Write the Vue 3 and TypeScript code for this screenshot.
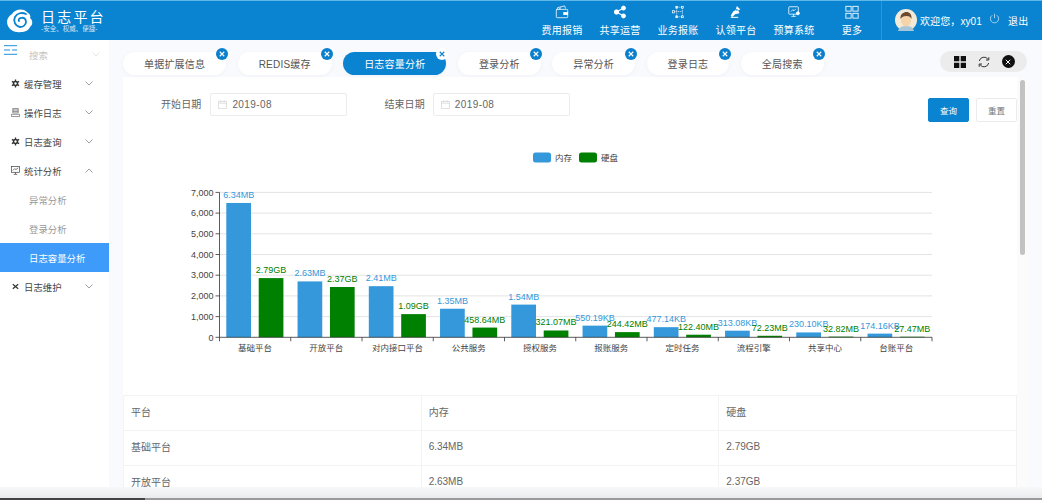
<script setup lang="ts">
const navItems = ["费用报销", "共享运营", "业务报账", "认领平台", "预算系统", "更多"];
const tabs = ["单据扩展信息", "REDIS缓存", "日志容量分析", "登录分析", "异常分析", "登录日志", "全局搜索"];
const activeTab = 2;

const chart = [
  { name: "基础平台", mem: 6490, memLabel: "6.34MB", disk: 2860, diskLabel: "2.79GB" },
  { name: "开放平台", mem: 2700, memLabel: "2.63MB", disk: 2430, diskLabel: "2.37GB" },
  { name: "对内接口平台", mem: 2470, memLabel: "2.41MB", disk: 1120, diskLabel: "1.09GB" },
  { name: "公共服务", mem: 1380, memLabel: "1.35MB", disk: 470, diskLabel: "458.64MB" },
  { name: "授权服务", mem: 1580, memLabel: "1.54MB", disk: 329, diskLabel: "321.07MB" },
  { name: "报账服务", mem: 563, memLabel: "550.19KB", disk: 250, diskLabel: "244.42MB" },
  { name: "定时任务", mem: 489, memLabel: "477.14KB", disk: 125, diskLabel: "122.40MB" },
  { name: "流程引擎", mem: 320, memLabel: "313.08KB", disk: 74, diskLabel: "72.23MB" },
  { name: "共享中心", mem: 235, memLabel: "230.10KB", disk: 34, diskLabel: "32.82MB" },
  { name: "台账平台", mem: 178, memLabel: "174.16KB", disk: 28, diskLabel: "27.47MB" },
];

const x0 = 219.5;
const xEnd = 932;
const y0 = 337.3;
const catW = (xEnd - x0) / 10;
const barW = 24.7;
const yOf = (v: number) => y0 - (v / 1000) * 20.7;
const ticks = [0, 1000, 2000, 3000, 4000, 5000, 6000, 7000];
const catX = (i: number) => x0 + i * catW;

const rows = [
  ["基础平台", "6.34MB", "2.79GB"],
  ["开放平台", "2.63MB", "2.37GB"],
];
</script>

<template>
  <div class="page">
    <header class="topbar">
      <div class="brand">
        <svg class="logo" viewBox="0 0 26 24" width="26" height="24">
          <path d="M5 5C8 0 16-1 20 3c3 2 4 4 3 6 3 2 3 7 0 9-1 3-5 5-9 5-6 1-11-2-13-6-2-4-1-9 4-12z" fill="#fff" />
          <path d="M19 5c-4-2-9-1-11 3-2 4 0 9 5 10 3 0 6-2 6-5s-2-5-5-4c-2 0-3 2-2 3" fill="none" stroke="#0a84d0" stroke-width="1.8" stroke-linecap="round" />
        </svg>
        <div class="brand-text">
          <div class="brand-title">日志平台</div>
          <div class="brand-sub">-安全、权威、便捷-</div>
        </div>
      </div>
      <nav class="nav">
        <div v-for="(item, i) in navItems" :key="item" class="nav-item">
          <svg width="14" height="14" viewBox="0 0 16 16" class="nav-icon">
            <g v-if="i === 0" fill="none" stroke="#fff" stroke-width=".9">
              <path d="M2 6l1-3 8-2 1 3" />
              <rect x="1.5" y="5" width="13" height="9.5" rx="1" />
              <rect x="10" y="8.5" width="4.5" height="2.5" fill="#fff" />
              <path d="M4 5l3-2" />
            </g>
            <g v-else-if="i === 1" fill="#fff" stroke="#fff">
              <path d="M12 3.5L4 8l8 4.500" fill="none" stroke-width="1.200" />
              <circle cx="12" cy="3.500" r="2.300" />
              <circle cx="4" cy="8" r="2.500" />
              <circle cx="12" cy="12.500" r="2.300" />
            </g>
            <g v-else-if="i === 2" fill="none" stroke="#fff" stroke-width=".8">
              <rect x="1.500" y="6.500" width="2.500" height="2.500" />
              <rect x="5.500" y="1.500" width="2" height="2" />
              <rect x="12" y="1.500" width="2" height="2" />
              <rect x="5.500" y="12.500" width="2" height="2" />
              <rect x="12" y="12.500" width="2" height="2" />
              <path d="M6.500 3.500v9M13 3.500v9M7.500 2.500H12M7.500 13.500H12M4 7.500h9" stroke-dasharray="1.200 .8" />
            </g>
            <g v-else-if="i === 3" fill="#fff">
              <path d="M9 1l4 4-2.500 1 1.500 3.500-5 1L3.500 14 2 12l3-5 2.500-1z" />
              <path d="M2 13.500h8.500v1.200H2z" />
              <circle cx="9" cy="5.500" r="1" fill="#0a84d0" />
            </g>
            <g v-else-if="i === 4" fill="none" stroke="#fff" stroke-width=".9">
              <rect x="2" y="2" width="11" height="8.500" rx=".8" />
              <path d="M5 13h5M7.500 10.500V13M4.500 7.500l2-2 1.500 1 2-2" />
              <circle cx="12.500" cy="9.500" r="1.700" fill="#fff" />
            </g>
            <g v-else fill="none" stroke="#fff" stroke-width="1">
              <rect x="1" y="1.500" width="6" height="5.500" />
              <rect x="9" y="1.500" width="6" height="5.500" />
              <rect x="1" y="9.500" width="6" height="5.500" />
              <rect x="9" y="9.500" width="6" height="5.500" />
            </g>
          </svg>
          <span>{{ item }}</span>
        </div>
      </nav>
      <div class="user">
        <svg class="avatar" viewBox="0 0 22 22" width="22" height="22">
          <circle cx="11" cy="11" r="11" fill="#f3ead8" />
          <path d="M3 22c1-4 4-5 8-5s7 1 8 5z" fill="#a9c6d8" />
          <ellipse cx="11" cy="11.500" rx="5" ry="6" fill="#f4d4a8" />
          <path d="M5.500 10c-.5-5 3-7 6-7s5.500 2.500 5 7c-1-2-2-3-5-3s-5 1-6 3z" fill="#6b4a32" />
        </svg>
        <span class="welcome">欢迎您，xy01</span>
        <svg class="power" viewBox="0 0 12 12" width="11" height="11">
          <path d="M3.500 2.500a4.500 4.500 0 1 0 5 0M6 .8v4.700" fill="none" stroke="#d6ecf9" stroke-width=".8" />
        </svg>
        <span class="logout">退出</span>
      </div>
    </header>

    <div class="body">
      <aside class="sidebar">
        <svg class="toggle" viewBox="0 0 14 10" width="14" height="10">
          <path d="M0 .7h13M0 5h6M8 5h5M0 9.300h13" stroke="#1f8fdc" stroke-width="1" />
        </svg>
        <div class="search">
          <span>搜索</span>
          <svg class="chev" viewBox="0 0 8 5" width="8" height="5"><path d="M.5.500L4 4 7.500.500" fill="none" stroke="#ddd" stroke-width=".8" /></svg>
        </div>
        <div class="menu-item">
          <svg viewBox="0 0 10 10" width="9" height="9"><path d="M5 .5v9M1 2.700l8 4.600M9 2.700L1 7.300" stroke="#333" stroke-width="1.500" /><circle cx="5" cy="5" r="3" fill="#333" /><circle cx="5" cy="5" r="1.300" fill="#fff" /></svg>
          <span>缓存管理</span>
          <svg class="chev" viewBox="0 0 8 5" width="8" height="5"><path d="M.5.500L4 4 7.500.500" fill="none" stroke="#888" stroke-width=".8" /></svg>
        </div>
        <div class="menu-item">
          <svg viewBox="0 0 10 10" width="9" height="9"><path d="M2 .5h6v5H2zM2 2.200h6M2 3.800h6M.5 7h9v2.500h-9z" fill="none" stroke="#555" stroke-width=".7" /></svg>
          <span>操作日志</span>
          <svg class="chev" viewBox="0 0 8 5" width="8" height="5"><path d="M.5.500L4 4 7.500.500" fill="none" stroke="#888" stroke-width=".8" /></svg>
        </div>
        <div class="menu-item">
          <svg viewBox="0 0 10 10" width="9" height="9"><path d="M5 .5v9M1 2.700l8 4.600M9 2.700L1 7.300" stroke="#333" stroke-width="1.500" /><circle cx="5" cy="5" r="3" fill="#333" /><circle cx="5" cy="5" r="1.300" fill="#fff" /></svg>
          <span>日志查询</span>
          <svg class="chev" viewBox="0 0 8 5" width="8" height="5"><path d="M.5.500L4 4 7.500.500" fill="none" stroke="#888" stroke-width=".8" /></svg>
        </div>
        <div class="menu-item">
          <svg viewBox="0 0 10 10" width="9" height="9"><rect x=".5" y=".5" width="9" height="6.500" fill="none" stroke="#444" stroke-width=".8" /><path d="M2 5l2-2 1.500 1L8 2M3 9.300h4M5 7v2" fill="none" stroke="#444" stroke-width=".8" /></svg>
          <span>统计分析</span>
          <svg class="chev" viewBox="0 0 8 5" width="8" height="5"><path d="M.5 4.500L4 1l3.500 3.500" fill="none" stroke="#888" stroke-width=".8" /></svg>
        </div>
        <div class="sub-item">异常分析</div>
        <div class="sub-item">登录分析</div>
        <div class="sub-item active">日志容量分析</div>
        <div class="menu-item">
          <svg viewBox="0 0 10 10" width="9" height="9"><path d="M2 2.500l6 5M8 2.500L2 7.500" stroke="#333" stroke-width="1.300" /></svg>
          <span>日志维护</span>
          <svg class="chev" viewBox="0 0 8 5" width="8" height="5"><path d="M.5.500L4 4 7.500.500" fill="none" stroke="#888" stroke-width=".8" /></svg>
        </div>
      </aside>

      <main class="main">
        <div class="tabbar">
          <div class="tabs">
            <div v-for="(tab, i) in tabs" :key="tab" class="tab" :class="{ 'tab-active': i === activeTab }">
              {{ tab }}
              <span class="tab-close">
                <svg viewBox="0 0 8 8" width="6" height="6"><path d="M1 1l6 6M7 1L1 7" stroke="currentColor" stroke-width="1.500" /></svg>
              </span>
            </div>
          </div>
          <div class="tools">
            <svg viewBox="0 0 12 12" width="12" height="12"><path d="M0 0h5.300v5.300H0zM6.700 0H12v5.300H6.700zM0 6.700h5.300V12H0zM6.700 6.700H12V12H6.700z" fill="#111" /></svg>
            <svg viewBox="0 0 12 12" width="12" height="12"><path d="M1.300 5A4.800 4.800 0 0 1 10 3.300M10.700 7A4.800 4.800 0 0 1 2 8.700" fill="none" stroke="#222" stroke-width=".9" /><path d="M10.800 1.200v2.800H8M1.200 10.800V8H4" fill="none" stroke="#222" stroke-width=".9" /></svg>
            <span class="tool-close"><svg viewBox="0 0 8 8" width="6" height="6"><path d="M1 1l6 6M7 1L1 7" stroke="#fff" stroke-width="1.300" /></svg></span>
          </div>
        </div>

        <div class="content">
          <section class="panel">
            <div class="filters">
              <label class="filter-label first">开始日期</label>
              <div class="date-input">
                <svg viewBox="0 0 10 10" width="9" height="9"><path d="M.5 1.500h9v8h-9zM.5 3.500h9M3 .5v2M7 .5v2" fill="none" stroke="#ccc" stroke-width=".7" /></svg>
                <span>2019-08</span>
              </div>
              <label class="filter-label second">结束日期</label>
              <div class="date-input">
                <svg viewBox="0 0 10 10" width="9" height="9"><path d="M.5 1.500h9v8h-9zM.5 3.500h9M3 .5v2M7 .5v2" fill="none" stroke="#ccc" stroke-width=".7" /></svg>
                <span>2019-08</span>
              </div>
              <div class="actions">
                <button class="btn btn-primary">查询</button>
                <button class="btn">重置</button>
              </div>
            </div>

            <svg class="chart" viewBox="123 145 894 250" width="894" height="250">
              <rect x="533" y="152.500" width="18" height="10" rx="2.500" fill="#3498db" />
              <text x="555" y="161" class="legend">内存</text>
              <rect x="579" y="152.500" width="18" height="10" rx="2.500" fill="#008000" />
              <text x="601" y="161" class="legend">硬盘</text>

              <g v-for="t in ticks" :key="t">
                <line v-if="t > 0" :x1="x0" :x2="xEnd" :y1="yOf(t)" :y2="yOf(t)" stroke="#e4e4e4" />
                <line :x1="x0 - 4" :x2="x0" :y1="yOf(t)" :y2="yOf(t)" stroke="#333" stroke-width=".8" />
                <text :x="x0 - 6" :y="yOf(t) + 3.200" text-anchor="end" class="axis">{{ t.toLocaleString("en-US") }}</text>
              </g>

              <g v-for="(c, i) in chart" :key="c.name">
                <rect :x="catX(i) + 6.800" :y="yOf(c.mem)" :width="barW" :height="y0 - yOf(c.mem)" fill="#3498db" />
                <rect :x="catX(i) + 39.200" :y="yOf(c.disk)" :width="barW" :height="y0 - yOf(c.disk)" fill="#008000" />
                <text :x="catX(i) + 6.800 + barW / 2" :y="yOf(c.mem) - 5" text-anchor="middle" class="val" fill="#3498db">{{ c.memLabel }}</text>
                <text :x="catX(i) + 39.200 + barW / 2" :y="yOf(c.disk) - 5" text-anchor="middle" class="val" fill="#008000">{{ c.diskLabel }}</text>
                <text :x="catX(i) + catW / 2" y="350.500" text-anchor="middle" class="axis cat">{{ c.name }}</text>
                <line :x1="catX(i)" :x2="catX(i)" :y1="y0" :y2="y0 + 4" stroke="#333" stroke-width=".8" />
              </g>
              <line :x1="xEnd" :x2="xEnd" :y1="y0" :y2="y0 + 4" stroke="#333" stroke-width=".8" />
              <line :x1="x0" :x2="x0" :y1="yOf(7000)" :y2="y0" stroke="#333" stroke-width=".8" />
              <line :x1="x0" :x2="xEnd" :y1="y0" :y2="y0" stroke="#333" stroke-width=".8" />
            </svg>

            <table class="data-table">
              <thead>
                <tr><th>平台</th><th>内存</th><th>硬盘</th></tr>
              </thead>
              <tbody>
                <tr v-for="row in rows" :key="row[0]">
                  <td v-for="cell in row" :key="cell">{{ cell }}</td>
                </tr>
              </tbody>
            </table>
          </section>
          <div class="scroll-track"><div class="scroll-thumb"></div></div>
        </div>
      </main>
    </div>

    <footer class="bottom-fade"><div class="bottom-dark"></div></footer>
  </div>
</template>

<style>
html,
body {
  margin: 0;
  background: #f8fafd;
}
</style>

<style scoped>
.page {
  width: 1042px;
  height: 500px;
  overflow: hidden;
  display: flex;
  flex-direction: column;
  background: #f8fafd;
  font-family: "Liberation Sans", "Noto Sans CJK SC", sans-serif;
  font-size: 10px;
  color: #666;
}

.topbar {
  flex: 0 0 40px;
  box-sizing: border-box;
  display: flex;
  align-items: center;
  background: #0a84d0;
  border-top: 1px solid #5fb8ea;
  color: #fff;
}

.brand {
  display: flex;
  align-items: center;
  gap: 8px;
  padding-left: 7px;
}

.brand-title {
  font-size: 14px;
  line-height: 16px;
  letter-spacing: 2.2px;
  font-family: "Noto Sans CJK SC", sans-serif;
}

.brand-sub {
  font-size: 6.500px;
  line-height: 10px;
  opacity: 0.8;
  white-space: nowrap;
}

.nav {
  margin-left: auto;
  display: flex;
  height: 100%;
}

.nav-item {
  width: 58px;
  display: flex;
  flex-direction: column;
  align-items: center;
  justify-content: flex-start;
  padding-top: 4px;
  box-sizing: border-box;
  letter-spacing: 0.2px;
  line-height: 14px;
}

.nav-icon {
  margin-bottom: 5px;
}

.user {
  width: 161px;
  height: 100%;
  box-sizing: border-box;
  border-left: 1px solid #2f97d8;
  padding-left: 13px;
  display: flex;
  align-items: center;
  padding-bottom: 1px;
}

.avatar {
  margin-right: 3px;
}

.welcome {
  white-space: nowrap;
  letter-spacing: 0.1px;
}

.power {
  margin-left: 7px;
  margin-bottom: 4px;
}

.logout {
  margin-left: 8px;
  letter-spacing: 0.2px;
}

.body {
  flex: 1;
  display: flex;
  min-height: 0;
}

.sidebar {
  flex: 0 0 109px;
  position: relative;
  background: #fff;
  color: #444;
  font-size: 9.400px;
}

.toggle {
  position: absolute;
  left: 4px;
  top: 5px;
}

.search {
  height: 29px;
  display: flex;
  align-items: center;
  padding-left: 29px;
  padding-right: 9px;
  color: #c4c4c4;
}

.search .chev,
.menu-item .chev {
  margin-left: auto;
}

.menu-item {
  height: 29px;
  display: flex;
  align-items: center;
  gap: 4px;
  padding-left: 11px;
  padding-right: 16px;
}

.sub-item {
  height: 29px;
  display: flex;
  align-items: center;
  padding-left: 29px;
  color: #999;
}

.sub-item.active {
  background: #3f9bfa;
  color: #fff;
}

.main {
  flex: 1;
  display: flex;
  flex-direction: column;
  padding-left: 14px;
  min-width: 0;
}

.tabbar {
  flex: 0 0 37px;
  display: flex;
  align-items: flex-start;
  padding-top: 12px;
  box-sizing: border-box;
}

.tabs {
  display: flex;
  gap: 11.500px;
}

.tab {
  position: relative;
  height: 23px;
  box-sizing: border-box;
  padding: 0 21px 1px;
  display: flex;
  align-items: center;
  border-radius: 12px;
  background: #fff;
  box-shadow: 0 1px 4px rgba(0, 0, 0, 0.04);
  color: #555;
  letter-spacing: 0.2px;
  white-space: nowrap;
}

.tab-active {
  background: #0a84d0;
  color: #fff;
}

.tab-close {
  position: absolute;
  top: -4px;
  right: -1.500px;
  width: 12px;
  height: 12px;
  border-radius: 50%;
  background: #0a7fcb;
  color: #fff;
  display: flex;
  align-items: center;
  justify-content: center;
}

.tab-active .tab-close {
  background: #fff;
  color: #0a84d0;
}

.tools {
  margin-left: auto;
  margin-right: 15px;
  margin-top: -1px;
  width: 87px;
  height: 21px;
  box-sizing: border-box;
  padding-left: 1.500px;
  border-radius: 11px;
  background: #ececec;
  display: flex;
  align-items: center;
  justify-content: center;
  gap: 12px;
}

.tool-close {
  width: 13px;
  height: 13px;
  border-radius: 50%;
  background: #111;
  display: flex;
  align-items: center;
  justify-content: center;
}

.content {
  flex: 1;
  display: flex;
  min-height: 0;
}

.panel {
  width: 894px;
  background: #fff;
  overflow: hidden;
}

.filters {
  height: 68px;
  box-sizing: border-box;
  padding-top: 16px;
  display: flex;
  align-items: flex-start;
}

.filter-label {
  line-height: 23px;
  font-size: 10px;
  letter-spacing: 0.1px;
  color: #666;
}

.filter-label.first {
  margin-left: 38px;
  margin-right: 9px;
}

.filter-label.second {
  margin-left: 37px;
  margin-right: 8px;
}

.date-input {
  width: 137px;
  height: 23px;
  box-sizing: border-box;
  border: 1px solid #ececec;
  border-radius: 2px;
  display: flex;
  align-items: center;
  gap: 5px;
  padding-left: 7px;
  color: #666;
  letter-spacing: 0.4px;
}

.actions {
  margin-left: auto;
  margin-top: 5px;
  display: flex;
  gap: 7px;
}

.btn {
  width: 41px;
  height: 24px;
  padding: 0;
  border: 1px solid #ececec;
  border-radius: 2px;
  background: #fff;
  color: #777;
  font: inherit;
  font-size: 8.500px;
}

.btn-primary {
  background: #0a84d0;
  border-color: #0a84d0;
  color: #fff;
}

.chart {
  display: block;
}

.legend {
  font-size: 8.500px;
  fill: #444;
}

.axis {
  font-size: 9px;
  fill: #444;
}

.cat {
  font-size: 8.500px;
}

.val {
  font-size: 9px;
}

.data-table {
  width: 100%;
  border-collapse: collapse;
  table-layout: fixed;
  color: #666;
  font-size: 10px;
}

.data-table th,
.data-table td {
  height: 35px;
  box-sizing: border-box;
  padding: 0 7px 3px;
  text-align: left;
  font-weight: 400;
  border: 1px solid #f3f3f3;
}

.scroll-track {
  width: 10px;
  display: flex;
  justify-content: center;
  background: #fbfbfb;
}

.scroll-thumb {
  width: 5px;
  height: 175px;
  margin-top: 3px;
  border-radius: 3px;
  background: #c2c2c2;
}

.bottom-fade {
  flex: 0 0 13px;
  position: relative;
  background: linear-gradient(to bottom, #f7f8fa, #e9ebee 85%, #9a9a9a 85%);
}

.bottom-dark {
  position: absolute;
  left: 0;
  bottom: 0;
  width: 145px;
  height: 2px;
  background: #444;
}
</style>
